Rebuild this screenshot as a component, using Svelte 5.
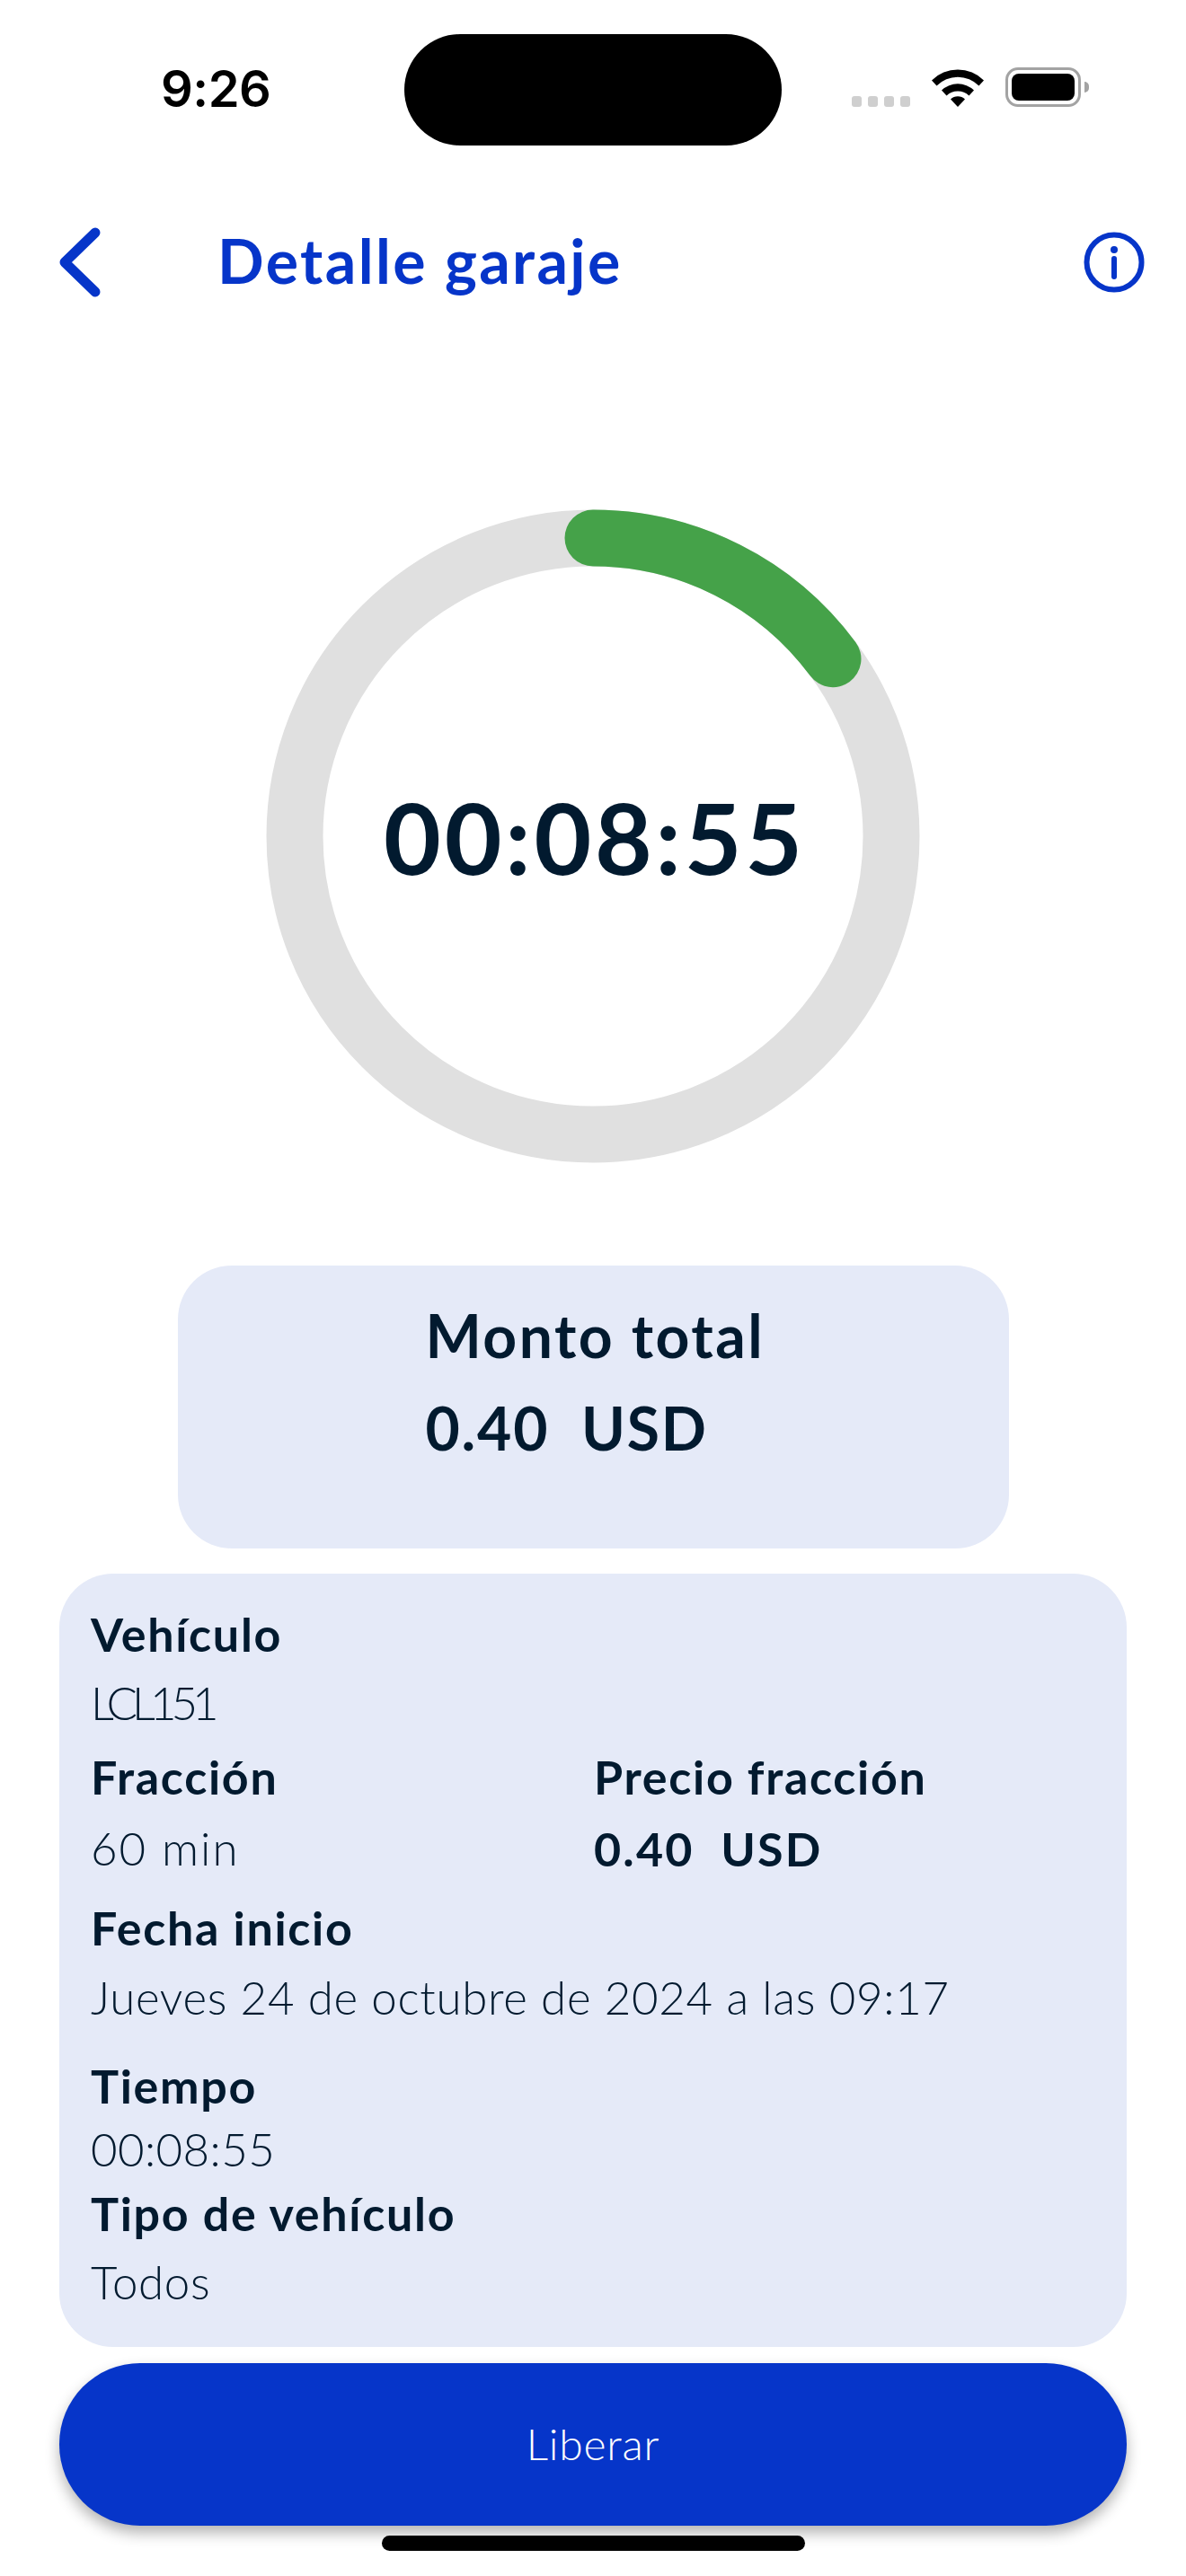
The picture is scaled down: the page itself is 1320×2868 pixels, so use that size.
<script lang="ts">
  const progress = 0.1486;
  const radius = 332;
  const circumference = 2 * Math.PI * radius;
  const dash = progress * circumference;
</script>

<div class="screen">
  <div class="status-bar">
    <span class="clock">9:26</span>
    <div class="island"></div>
    <div class="status-icons">
      <div class="signal">
        <i></i><i></i><i></i><i></i>
      </div>
      <svg class="wifi" width="58" height="42" viewBox="0 0 58 42">
        <path d="M0 12.500 A41 41 0 0 1 58 12.500 L52.500 18.500 A33 33 0 0 0 5.500 18.500 Z" fill="#000" />
        <path d="M11 23.500 A26 26 0 0 1 47 23.500 L41.500 29.500 A18 18 0 0 0 16.500 29.500 Z" fill="#000" />
        <path d="M21 33.500 A11.500 11.500 0 0 1 37 33.500 L29 42 Z" fill="#000" />
      </svg>
      <div class="battery"><div class="battery-fill"></div></div>
      <div class="battery-nub"></div>
    </div>
  </div>

  <header class="top-bar">
    <svg class="back" width="48" height="78" viewBox="0 0 48 78" fill="none">
      <path d="M41 6 L7 39 L41 72" stroke="#0635c9" stroke-width="11" stroke-linecap="round" stroke-linejoin="round" />
    </svg>
    <h1>Detalle garaje</h1>
    <svg class="info" width="68" height="68" viewBox="0 0 68 68" fill="none">
      <circle cx="34" cy="34" r="30.500" stroke="#0635c9" stroke-width="6" />
      <circle cx="34" cy="20" r="4" fill="#0635c9" />
      <path d="M34 30 V50" stroke="#0635c9" stroke-width="6" stroke-linecap="round" />
    </svg>
  </header>

  <div class="timer">
    <svg width="728" height="728" viewBox="0 0 728 728" fill="none">
      <circle cx="364" cy="364" r={radius} stroke="#e0e0e0" stroke-width="63" />
      <circle
        cx="364"
        cy="364"
        r={radius}
        stroke="#45a249"
        stroke-width="63"
        stroke-linecap="round"
        stroke-dasharray="{dash} {circumference}"
        transform="rotate(-90 364 364)"
      />
    </svg>
    <span class="time">00:08:55</span>
  </div>

  <section class="total">
    <div class="total-inner">
      <div class="total-label">Monto total</div>
      <div class="total-value">0.40&nbsp; USD</div>
    </div>
  </section>

  <section class="details">
    <div class="label">Vehículo</div>
    <div class="value v-plate">LCL151</div>

    <div class="cols">
      <div>
        <div class="label">Fracción</div>
        <div class="value v-fraction">60 min</div>
      </div>
      <div>
        <div class="label">Precio fracción</div>
        <div class="price">0.40&nbsp; USD</div>
      </div>
    </div>

    <div class="label l-date">Fecha inicio</div>
    <div class="value v-date">Jueves 24 de octubre de 2024 a las 09:17</div>

    <div class="label l-time">Tiempo</div>
    <div class="value v-time">00:08:55</div>

    <div class="label l-type">Tipo de vehículo</div>
    <div class="value v-type">Todos</div>
  </section>

  <button class="release">Liberar</button>
  <div class="home-indicator"></div>
</div>

<style>
  :global(body) {
    margin: 0;
    background: #fff;
  }

  .screen {
    width: 1320px;
    height: 2868px;
    overflow: hidden;
    background: #fff;
    font-family: 'Lato', 'Liberation Sans', sans-serif;
    color: #021a2f;
    display: flex;
    flex-direction: column;
    align-items: center;
  }

  .status-bar {
    width: 100%;
    height: 124px;
    margin-top: 38px;
    display: grid;
    grid-template-columns: 450px 420px 450px;
  }

  .clock {
    font-family: 'Inter', 'Liberation Sans', sans-serif;
    font-size: 56px;
    font-weight: 600;
    line-height: 60px;
    letter-spacing: -0.5px;
    color: #000;
    padding: 31px 0 0 179px;
  }

  .island {
    height: 124px;
    background: #000;
    border-radius: 62px;
  }

  .status-icons {
    position: relative;
    display: flex;
    align-items: flex-end;
    height: 81px;
    padding-left: 78px;
  }

  .signal {
    display: flex;
    gap: 7px;
    margin-right: 24px;
  }

  .signal i {
    width: 11px;
    height: 12px;
    border-radius: 3px;
    background: #cfcfcf;
  }

  .wifi {
    margin-right: 24px;
  }

  .battery {
    box-sizing: border-box;
    width: 84px;
    height: 44px;
    border: 3px solid #a3a3a3;
    border-radius: 14px;
    padding: 4px;
    background: #fff;
  }

  .battery-fill {
    height: 100%;
    background: #000;
    border-radius: 8px;
  }

  .battery-nub {
    width: 5px;
    height: 12px;
    margin: 0 0 16px 4px;
    background: #a3a3a3;
    border-radius: 0 6px 6px 0;
  }

  .top-bar {
    box-sizing: border-box;
    width: 100%;
    height: 78px;
    margin-top: 91px;
    padding: 0 46px 0 65px;
    display: flex;
    align-items: center;
  }

  .top-bar h1 {
    margin: 0 0 4px 129px;
    flex: 1;
    font-size: 68px;
    font-weight: 700;
    letter-spacing: 2.4px;
    color: #0635c9;
    line-height: 74px;
    white-space: nowrap;
  }

  .timer {
    position: relative;
    width: 728px;
    height: 728px;
    margin-top: 236px;
    flex: none;
  }

  .timer svg {
    display: block;
  }

  .time {
    position: absolute;
    inset: 0;
    display: flex;
    align-items: center;
    justify-content: center;
    padding-left: 4px;
    font-size: 110px;
    font-weight: 700;
    letter-spacing: 3.8px;
  }

  .total {
    box-sizing: border-box;
    width: 925px;
    height: 315px;
    margin-top: 114px;
    flex: none;
    background: #e5eaf8;
    border-radius: 60px;
    padding: 38px 0 0 276px;
  }

  .total-label {
    font-size: 66px;
    font-weight: 700;
    letter-spacing: 2.5px;
    line-height: 80px;
  }

  .total-value {
    font-size: 66px;
    font-weight: 700;
    letter-spacing: 1.8px;
    line-height: 80px;
    margin-top: 23px;
  }

  .details {
    box-sizing: border-box;
    width: 1188px;
    height: 861px;
    margin-top: 28px;
    flex: none;
    background: #e5eaf8;
    border-radius: 60px;
    padding: 39px 35px 0;
  }

  .label {
    font-size: 52px;
    font-weight: 700;
    letter-spacing: 1.7px;
    line-height: 56px;
  }

  .value {
    font-size: 51px;
    font-weight: 300;
    letter-spacing: 0.7px;
    line-height: 56px;
  }

  .v-plate {
    margin-top: 21px;
    letter-spacing: -6px;
  }

  .cols {
    display: grid;
    grid-template-columns: 560px 1fr;
    margin-top: 26px;
  }

  .v-fraction {
    margin-top: 24px;
    letter-spacing: 2px;
  }

  .price {
    font-size: 52px;
    font-weight: 700;
    letter-spacing: 2.2px;
    line-height: 56px;
    margin-top: 24px;
  }

  .l-date {
    margin-top: 32px;
  }

  .v-date {
    margin-top: 22px;
  }

  .l-time {
    margin-top: 42px;
  }

  .v-time {
    margin-top: 15px;
    letter-spacing: 0.4px;
  }

  .l-type {
    margin-top: 15px;
  }

  .v-type {
    margin-top: 21px;
  }

  .release {
    width: 1188px;
    height: 181px;
    margin-top: 18px;
    flex: none;
    border: none;
    border-radius: 90px;
    background: #0635c9;
    color: #fff;
    font-family: inherit;
    font-size: 48px;
    font-weight: 300;
    letter-spacing: 0.8px;
    padding: 0 0 3px;
    box-shadow: 0 8px 16px rgba(0, 0, 0, 0.3);
  }

  .home-indicator {
    width: 471px;
    height: 17px;
    margin-top: 11px;
    flex: none;
    background: #000;
    border-radius: 9px;
  }
</style>
